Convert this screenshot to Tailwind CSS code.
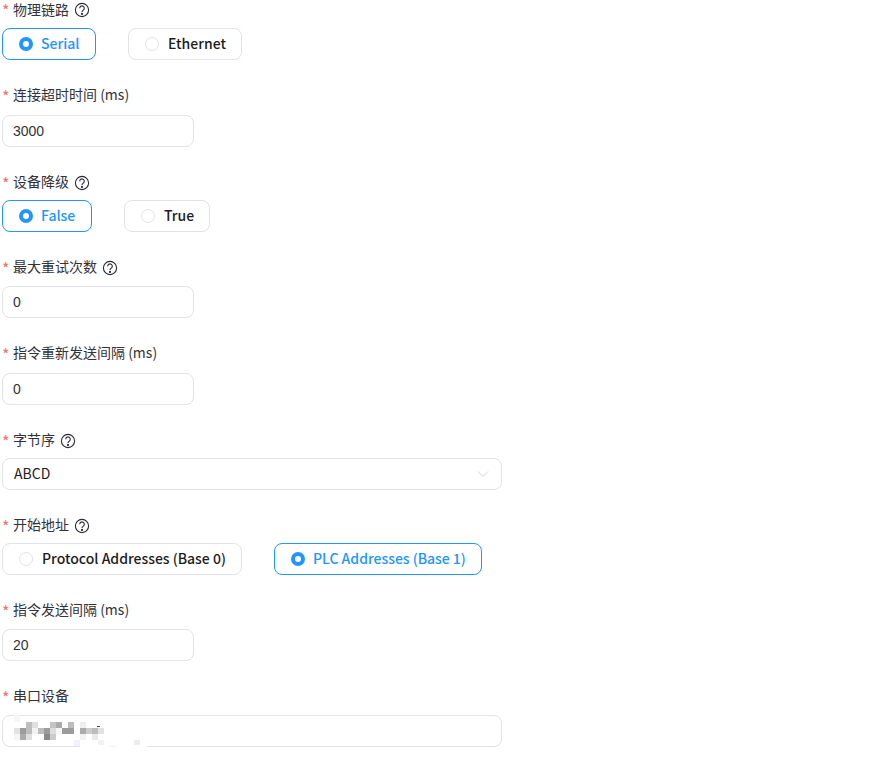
<!DOCTYPE html>
<html lang="en">
<head>
    <meta charset="UTF-8">
    <title>Modbus</title>
    <script src="https://cdn.jsdelivr.net/npm/@tailwindcss/browser@4"></script>
</head>
<body class="bg-white overflow-hidden font-['Noto_Sans_CJK_SC',sans-serif] text-[14px] text-[#1d1c23]">
<form class="pl-[2px] w-[500px]">

    <div class="h-[86px]">
        <div class="flex items-center h-[18px] leading-[18px] mb-[10px] text-[#33323a]"><span class="text-[#f76e6e] text-[16px] w-[11px] mt-[1px]">*</span>物理链路
            <svg class="ml-[5px] mt-[1px] w-[16px] h-[16px]" viewBox="0 0 16 16" fill="none" stroke="#2a2932" stroke-width="1.1"><circle cx="8" cy="8" r="6.6"/><path d="M5.7 6.2a2.3 2.3 0 1 1 3.6 1.9c-.9.6-1.3 1-1.3 1.9"/><circle cx="8" cy="11.9" r=".5" fill="#2a2932"/></svg>
        </div>
        <div class="flex gap-[32px]">
            <label class="flex items-center h-[32px] w-[94px] pl-[16px] border border-[#2196ff] rounded-[8px] font-medium text-[#2196ff]"><span class="w-[14px] h-[14px] rounded-full border-[4px] border-[#2196ff] bg-white mr-[8px]"></span><span class="-mt-[2px]">Serial</span></label>
            <label class="flex items-center h-[32px] w-[114px] pl-[16px] border border-[#e2e2ea] rounded-[8px] font-medium"><span class="w-[14px] h-[14px] rounded-full border border-[#e2e2ea] bg-white mr-[9px]"></span><span class="-mt-[2px]">Ethernet</span></label>
        </div>
    </div>

    <div class="h-[87px]">
        <div class="flex items-center h-[18px] pb-[2px] leading-[18px] mb-[11px] text-[#33323a]"><span class="text-[#f76e6e] text-[16px] w-[11px] mt-[3px]">*</span>连接超时时间 (ms)</div>
        <input value="3000" class="block w-[192px] h-[32px] px-[10px] border border-[#e2e2ea] rounded-[8px] font-['Liberation_Sans',sans-serif] text-[#33323a]">
    </div>

    <div class="h-[85px]">
        <div class="flex items-center h-[18px] pb-[2px] leading-[18px] mb-[9px] text-[#33323a]"><span class="text-[#f76e6e] text-[16px] w-[11px] mt-[3px]">*</span>设备降级
            <svg class="ml-[5px] mt-[3px] w-[16px] h-[16px]" viewBox="0 0 16 16" fill="none" stroke="#2a2932" stroke-width="1.1"><circle cx="8" cy="8" r="6.6"/><path d="M5.7 6.2a2.3 2.3 0 1 1 3.6 1.9c-.9.6-1.3 1-1.3 1.9"/><circle cx="8" cy="11.9" r=".5" fill="#2a2932"/></svg>
        </div>
        <div class="flex gap-[32px]">
            <label class="flex items-center h-[32px] w-[90px] pl-[16px] border border-[#2196ff] rounded-[8px] font-medium text-[#2196ff]"><span class="w-[14px] h-[14px] rounded-full border-[4px] border-[#2196ff] bg-white mr-[8px]"></span><span class="-mt-[2px]">False</span></label>
            <label class="flex items-center h-[32px] w-[86px] pl-[16px] border border-[#e2e2ea] rounded-[8px] font-medium"><span class="w-[14px] h-[14px] rounded-full border border-[#e2e2ea] bg-white mr-[9px]"></span><span class="-mt-[2px]">True</span></label>
        </div>
    </div>

    <div class="h-[86px]">
        <div class="flex items-center h-[18px] pb-[2px] leading-[18px] mb-[10px] text-[#33323a]"><span class="text-[#f76e6e] text-[16px] w-[11px] mt-[3px]">*</span>最大重试次数
            <svg class="ml-[5px] mt-[3px] w-[16px] h-[16px]" viewBox="0 0 16 16" fill="none" stroke="#2a2932" stroke-width="1.1"><circle cx="8" cy="8" r="6.6"/><path d="M5.7 6.2a2.3 2.3 0 1 1 3.6 1.9c-.9.6-1.3 1-1.3 1.9"/><circle cx="8" cy="11.9" r=".5" fill="#2a2932"/></svg>
        </div>
        <input value="0" class="block w-[192px] h-[32px] px-[10px] border border-[#e2e2ea] rounded-[8px] font-['Liberation_Sans',sans-serif] text-[#33323a]">
    </div>

    <div class="h-[87px]">
        <div class="flex items-center h-[18px] pb-[2px] leading-[18px] mb-[11px] text-[#33323a]"><span class="text-[#f76e6e] text-[16px] w-[11px] mt-[3px]">*</span>指令重新发送间隔 (ms)</div>
        <input value="0" class="block w-[192px] h-[32px] px-[10px] border border-[#e2e2ea] rounded-[8px] font-['Liberation_Sans',sans-serif] text-[#33323a]">
    </div>

    <div class="h-[85px]">
        <div class="flex items-center h-[18px] pb-[2px] leading-[18px] mb-[9px] text-[#33323a]"><span class="text-[#f76e6e] text-[16px] w-[11px] mt-[3px]">*</span>字节序
            <svg class="ml-[5px] mt-[3px] w-[16px] h-[16px]" viewBox="0 0 16 16" fill="none" stroke="#2a2932" stroke-width="1.1"><circle cx="8" cy="8" r="6.6"/><path d="M5.7 6.2a2.3 2.3 0 1 1 3.6 1.9c-.9.6-1.3 1-1.3 1.9"/><circle cx="8" cy="11.9" r=".5" fill="#2a2932"/></svg>
        </div>
        <div class="flex items-center justify-between w-[500px] h-[32px] pl-[11px] pr-[12px] border border-[#e2e2ea] rounded-[8px]">
            <span class="-mt-[2px]">ABCD</span>
            <svg class="w-[12px] h-[12px]" viewBox="0 0 12 12" fill="none" stroke="#d6d6dc"><path d="M1 3.5l5 5 5-5"/></svg>
        </div>
    </div>

    <div class="h-[85px]">
        <div class="flex items-center h-[18px] pb-[2px] leading-[18px] mb-[9px] text-[#33323a]"><span class="text-[#f76e6e] text-[16px] w-[11px] mt-[3px]">*</span>开始地址
            <svg class="ml-[5px] mt-[3px] w-[16px] h-[16px]" viewBox="0 0 16 16" fill="none" stroke="#2a2932" stroke-width="1.1"><circle cx="8" cy="8" r="6.6"/><path d="M5.7 6.2a2.3 2.3 0 1 1 3.6 1.9c-.9.6-1.3 1-1.3 1.9"/><circle cx="8" cy="11.9" r=".5" fill="#2a2932"/></svg>
        </div>
        <div class="flex gap-[32px]">
            <label class="flex items-center h-[32px] w-[240px] pl-[16px] border border-[#e2e2ea] rounded-[8px] font-medium"><span class="w-[14px] h-[14px] rounded-full border border-[#e2e2ea] bg-white mr-[9px]"></span><span class="-mt-[2px]">Protocol Addresses (Base 0)</span></label>
            <label class="flex items-center h-[32px] w-[208px] pl-[16px] border border-[#2196ff] rounded-[8px] font-medium text-[#2196ff]"><span class="w-[14px] h-[14px] rounded-full border-[4px] border-[#2196ff] bg-white mr-[8px]"></span><span class="-mt-[2px]">PLC Addresses (Base 1)</span></label>
        </div>
    </div>

    <div class="h-[86px]">
        <div class="flex items-center h-[18px] pb-[2px] leading-[18px] mb-[10px] text-[#33323a]"><span class="text-[#f76e6e] text-[16px] w-[11px] mt-[3px]">*</span>指令发送间隔 (ms)</div>
        <input value="20" class="block w-[192px] h-[32px] px-[10px] border border-[#e2e2ea] rounded-[8px] font-['Liberation_Sans',sans-serif] text-[#33323a]">
    </div>

    <div class="h-[60px]">
        <div class="flex items-center h-[18px] pb-[2px] leading-[18px] mb-[10px] text-[#33323a]"><span class="text-[#f76e6e] text-[16px] w-[11px] mt-[3px]">*</span>串口设备</div>
        <div class="relative w-[500px] h-[32px] border border-[#e2e2ea] rounded-[8px]">
            <!-- blurred out device path -->
            <svg class="absolute -left-[1px] -top-[1px]" width="160" height="36" viewBox="2 715 160 36" shape-rendering="crispEdges">
                <rect x="14" y="715" width="6" height="7" fill="#f6f6f8"/>
                <rect x="26" y="722" width="6" height="6" fill="#bdbdbd"/><rect x="32" y="722" width="6" height="6" fill="#dedede"/>
                <rect x="50" y="722" width="6" height="6" fill="#c4c4c4"/><rect x="56" y="722" width="6" height="6" fill="#ababab"/>
                <rect x="68" y="722" width="6" height="6" fill="#bdbdbd"/><rect x="80" y="722" width="6" height="6" fill="#eeeeee"/>
                <rect x="97" y="726" width="3" height="1" fill="#444444"/>
                <rect x="14" y="728" width="6" height="6" fill="#e2e2e2"/><rect x="20" y="728" width="6" height="6" fill="#9c9c9c"/>
                <rect x="26" y="728" width="6" height="6" fill="#bdbdbd"/><rect x="32" y="728" width="6" height="6" fill="#f2f2f2"/>
                <rect x="38" y="728" width="6" height="6" fill="#bdbdbd"/><rect x="44" y="728" width="6" height="6" fill="#9c9c9c"/>
                <rect x="50" y="728" width="6" height="6" fill="#dedede"/><rect x="56" y="728" width="6" height="6" fill="#f6f6f6"/>
                <rect x="62" y="728" width="12" height="6" fill="#9c9c9c"/><rect x="80" y="728" width="6" height="6" fill="#ababab"/>
                <rect x="86" y="728" width="6" height="6" fill="#cccccc"/><rect x="92" y="728" width="6" height="6" fill="#bdbdbd"/>
                <rect x="98" y="728" width="6" height="6" fill="#e2e2e2"/>
                <rect x="14" y="734" width="6" height="6" fill="#f6f6f6"/><rect x="20" y="734" width="6" height="6" fill="#ababab"/>
                <rect x="26" y="734" width="6" height="6" fill="#dedede"/><rect x="44" y="734" width="6" height="6" fill="#8a8a8a"/>
                <rect x="50" y="734" width="6" height="6" fill="#cccccc"/><rect x="80" y="734" width="6" height="6" fill="#f2f2f2"/>
                <rect x="92" y="734" width="6" height="6" fill="#eaeaea"/>
                <rect x="74" y="740" width="6" height="6" fill="#f1f1f7"/><rect x="98" y="740" width="6" height="6" fill="#f1f1f7"/>
                <rect x="134" y="740" width="6" height="6" fill="#ececf3"/>
                <rect x="80" y="745" width="66" height="3" fill="#ffffff"/>
                <rect x="110" y="746" width="6" height="2" fill="#f1f1f7"/><rect x="146" y="746" width="2" height="2" fill="#f1f1f7"/>
            </svg>
        </div>
    </div>

</form>
</body>
</html>
